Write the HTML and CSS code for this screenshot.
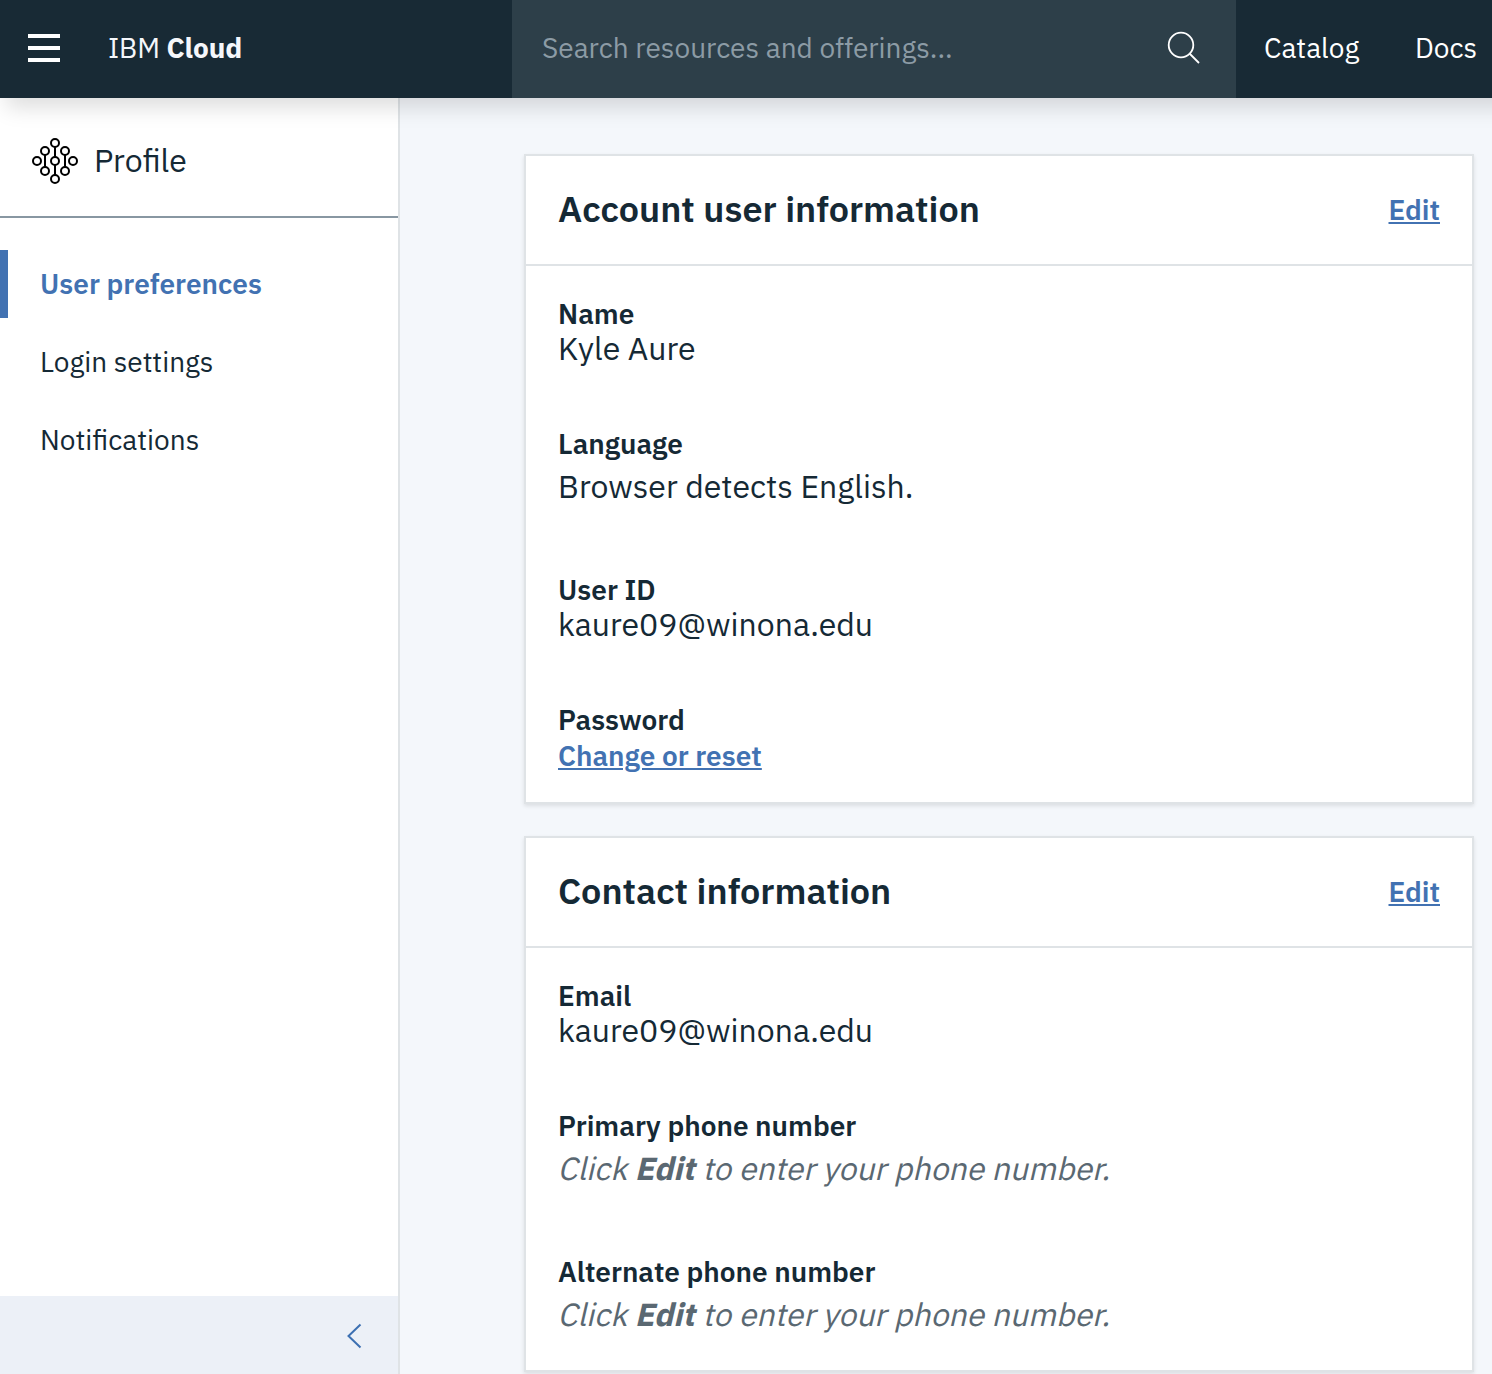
FILE: index.html
```html
<!DOCTYPE html>
<html lang="en">
<head>
<meta charset="utf-8">
<title>Profile - IBM Cloud</title>
<link rel="stylesheet" href="styles.css">
</head>
<body>
<header class="topbar">
  <button class="menu" aria-label="Menu"><span></span><span></span><span></span></button>
  <a class="brand"><span class="brand-ibm">IBM</span> <b>Cloud</b></a>
  <div class="search">
    <span class="placeholder">Search resources and offerings...</span>
    <svg width="34" height="34" viewBox="0 0 34 34" fill="none" stroke="#fff" stroke-width="1.8"><circle cx="14" cy="14" r="12.3"/><path d="M22.5 22.5 32 32"/></svg>
  </div>
  <nav class="links"><a class="catalog">Catalog</a><a class="docs">Docs</a></nav>
</header>
<div class="page">
  <aside class="sidebar">
    <div class="side-head">
      <svg width="46" height="46" viewBox="0 0 46 46" fill="none" stroke="#000" stroke-width="2">
        <circle cx="23" cy="5" r="4"/><circle cx="13" cy="13" r="4"/><circle cx="33" cy="13" r="4"/>
        <circle cx="5" cy="23" r="4"/><circle cx="23" cy="23" r="4"/><circle cx="41" cy="23" r="4"/>
        <circle cx="13" cy="33" r="4"/><circle cx="33" cy="33" r="4"/><circle cx="23" cy="41" r="4"/>
        <path d="M23 9v10M23 27v10M13 17v12M33 17v12"/>
      </svg>
      <span class="side-title">Profile</span>
    </div>
    <nav class="side-nav">
      <a class="item active">User preferences</a>
      <a class="item">Login settings</a>
      <a class="item">Notifications</a>
    </nav>
    <div class="collapse">
      <svg width="16" height="26" viewBox="0 0 16 26" fill="none" stroke="#3d70b2" stroke-width="2"><path d="M14.5 1.5 2.5 13l12 11.5"/></svg>
    </div>
  </aside>
  <main class="content">
    <section class="card">
      <div class="card-head"><h2>Account user information</h2><a class="link">Edit</a></div>
      <dl class="card-body">
        <div class="field"><dt>Name</dt><dd>Kyle Aure</dd></div>
        <div class="field spaced"><dt>Language</dt><dd>Browser detects English.</dd></div>
        <div class="field"><dt>User ID</dt><dd>kaure09@winona.edu</dd></div>
        <div class="field"><dt>Password</dt><dd class="action"><a class="link">Change or reset</a></dd></div>
      </dl>
    </section>
    <section class="card">
      <div class="card-head"><h2>Contact information</h2><a class="link">Edit</a></div>
      <dl class="card-body">
        <div class="field"><dt>Email</dt><dd>kaure09@winona.edu</dd></div>
        <div class="field spaced"><dt>Primary phone number</dt><dd><span class="hint">Click <b>Edit</b> to enter your phone number.</span></dd></div>
        <div class="field spaced"><dt>Alternate phone number</dt><dd><span class="hint">Click <b>Edit</b> to enter your phone number.</span></dd></div>
      </dl>
    </section>
  </main>
</div>
</body>
</html>
```
FILE: styles.css
```css
* { box-sizing: border-box; }
body {
  margin: 0;
  height: 1374px;
  overflow: hidden;
  display: flex;
  flex-direction: column;
  background: #f4f7fb;
  color: #152935;
  font: 28px/36px "IBM Plex Sans", "Open Sans", sans-serif;
  white-space: nowrap;
}
h2, dl, dd { margin: 0; }

.topbar {
  position: relative;
  z-index: 1;
  flex: none;
  width: calc(100% + 40px);
  height: 98px;
  padding-bottom: 2px;
  display: flex;
  align-items: center;
  background: #182a35;
  color: #fff;
  box-shadow: 0 16px 20px -6px rgba(0, 0, 0, .13);
}
.menu {
  width: 32px;
  margin: 0 48px 0 28px;
  padding: 0;
  border: 0;
  background: none;
  display: flex;
  flex-direction: column;
  gap: 8px;
}
.menu span { height: 4px; background: #fff; }
.brand { width: 404px; color: #f5f7fb; letter-spacing: -.1px; }
.search {
  width: 724px;
  height: 98px;
  margin-bottom: -2px;
  padding: 0 35px 2px 30px;
  display: flex;
  align-items: center;
  justify-content: space-between;
  background: #2d3f49;
}
.placeholder { color: #8c9ba5; }
.links { padding-left: 28px; display: flex; }
.catalog { width: 151px; }

.page { flex: 1; min-height: 0; display: flex; }
.sidebar {
  width: 400px;
  flex: none;
  display: flex;
  flex-direction: column;
  background: #fff;
  border-right: 2px solid #dfe3e6;
}
.side-head {
  height: 120px;
  padding: 8px 0 0 32px;
  display: flex;
  align-items: center;
  gap: 16px;
  border-bottom: 2px solid #8897a2;
}
.side-title { padding-bottom: 2px; font-size: 32px; }
.side-nav { flex: 1; padding-top: 32px; display: flex; flex-direction: column; gap: 10px; }
.item { height: 68px; padding: 16px 0 16px 40px; }
.item.active { padding-left: 32px; border-left: 8px solid #4272b2; color: #4272b2; font-weight: 600; }
.collapse {
  height: 78px;
  padding: 2px 36px 0 0;
  display: flex;
  align-items: center;
  justify-content: flex-end;
  background: #ecf0f7;
}

.content { width: 1074px; padding: 56px 0 0 124px; display: flex; flex-direction: column; gap: 32px; }
.card { background: #fff; border: 2px solid #dfe3e6; box-shadow: 0 2px 4px rgba(0, 0, 0, .1); }
.card-head {
  height: 110px;
  padding: 0 32px;
  display: flex;
  align-items: center;
  justify-content: space-between;
  border-bottom: 2px solid #dfe3e6;
}
h2 { padding-bottom: 2px; font-size: 36px; font-weight: 600; }
.link { color: #4272b2; font-weight: 600; text-decoration: underline; text-decoration-thickness: 2px; text-underline-offset: 2px; }
.card-body { padding: 30px 32px 28px; display: flex; flex-direction: column; gap: 60px; }
dt { font-weight: 600; }
dd { height: 34px; font-size: 32px; line-height: 32px; }
.spaced dd { height: 42px; padding-top: 8px; }
.field.spaced:not(:last-child) { margin-bottom: 8px; }
.spaced:last-child { padding-bottom: 10px; }
dd.action { height: 36px; padding-top: 1px; font-size: 28px; line-height: 34px; }
/* slanted roman rather than the true italic face */
.hint { display: inline-block; vertical-align: top; color: #5a6872; transform: skewX(-13deg); transform-origin: 0 26px; }
```
